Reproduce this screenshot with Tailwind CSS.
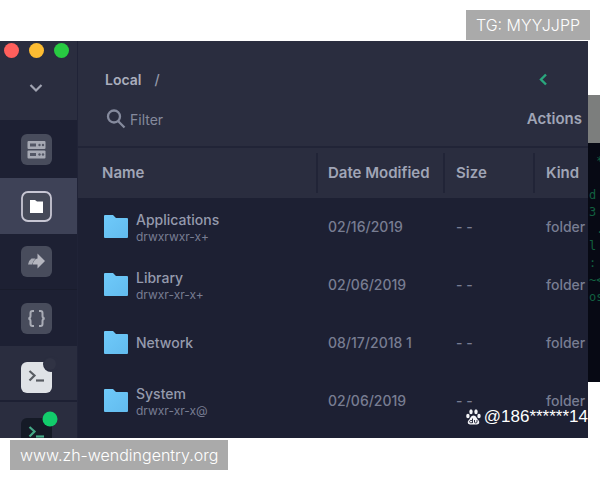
<!DOCTYPE html>
<html lang="en">
<head>
<meta charset="utf-8">
<title>File browser</title>
<script src="https://cdn.jsdelivr.net/npm/@tailwindcss/browser@4"></script>
</head>
<body class="relative flex min-h-screen flex-col overflow-hidden bg-white pt-[41px] pb-[42px] font-['Inter',sans-serif] text-sm text-[#9499ab]">
<div class="flex flex-1 items-stretch">
  <nav aria-label="Tools" class="flex w-[78px] shrink-0 flex-col border-r border-[#202337] bg-[#1d2033]">
    <div class="h-[79px] bg-[#2a2d3f]">
      <div class="flex gap-[10px] pt-[2px] pl-[4px]">
        <button aria-label="Close" class="size-[15px] rounded-full bg-[#ff5f5c]"></button>
        <button aria-label="Minimize" class="size-[15px] rounded-full bg-[#fdbc32]"></button>
        <button aria-label="Zoom" class="size-[15px] rounded-full bg-[#28cb42]"></button>
      </div>
      <button aria-label="Expand menu" class="mx-auto mt-[23px] block px-2 pr-[14px]">
        <svg width="14" height="14" viewBox="0 0 14 14" fill="none" stroke="#a1a4b2" stroke-width="2.2"><path d="M1.500 4 7 9.500 12.500 4"/></svg>
      </button>
    </div>
    <button aria-label="Servers" class="flex h-[58px] items-center pl-[21px]">
      <svg width="31" height="31" viewBox="0 0 31 31"><rect width="31" height="31" rx="6" fill="#484c5c"/><g fill="#a6a9b4"><rect x="6.500" y="7" width="18" height="8" rx="1"/><rect x="6.500" y="16.500" width="18" height="8" rx="1"/></g><g fill="#535766"><path d="M9 9.500h6v3H9zM9 19h6v3H9z"/><circle cx="18.500" cy="11" r="1.200"/><circle cx="22" cy="11" r="1.200"/><circle cx="18.500" cy="20.500" r="1.200"/><circle cx="22" cy="20.500" r="1.200"/></g></svg>
    </button>
    <button aria-label="Files" class="flex h-[56px] items-center bg-[#3e4257] pl-[21px]">
      <svg width="31" height="31" viewBox="0 0 31 31"><rect x="1" y="1" width="29" height="29" rx="6" fill="#454958" stroke="#c7c6d3" stroke-width="1.800"/><path d="M9 9h5l2 1.500h6V22H9z" fill="#fff"/></svg>
    </button>
    <button aria-label="Forward" class="flex h-[56px] items-center border-b border-[#191c2c] pl-[21px]">
      <svg width="31" height="31" viewBox="0 0 31 31" fill="#b5b6bf"><rect width="31" height="31" rx="6" fill="#484c5c"/><path d="M16.500 7.500l7.500 7.500-7.500 7.500V18.500h-5q1.500-5.500 5-6z"/><path d="M10.500 12.500h4q-2.500 2.500-3.500 6H7q.5-4 3.500-6z" fill="#a9abb5"/></svg>
    </button>
    <button aria-label="Snippets" class="flex h-[56px] items-center pl-[21px]">
      <svg width="31" height="31" viewBox="0 0 31 31"><rect width="31" height="31" rx="6" fill="#484c5c"/><path d="M13 8h-1.500q-2 0-2 2v3q0 2-2 2.500 2 .5 2 2.500v3q0 2 2 2H13M18 8h1.500q2 0 2 2v3q0 2 2 2.500-2 .5-2 2.500v3q0 2-2 2H18" fill="none" stroke="#a9acb6" stroke-width="2"/></svg>
    </button>
    <button aria-label="Terminal" class="flex h-[56px] items-center border-b-2 border-[#1d2033] bg-[#2a2d3f] pl-[21px]">
      <svg width="37" height="39" viewBox="0 -8 37 39"><rect width="31" height="31" rx="6" fill="#dfe2e6"/><circle cx="30" cy="2" r="8" fill="#2a2d3f"/><circle cx="29" cy="2" r="6" fill="#303344"/><path d="M8.500 9l5 4.500-5 5" fill="none" stroke="#585c62" stroke-width="2.200"/><path d="M15 18.500h8" stroke="#585c62" stroke-width="2.200"/></svg>
    </button>
    <button aria-label="Terminal, active session" class="flex h-[36px] items-start overflow-hidden bg-[#2a2d3f] pt-[9px] pl-[21px]">
      <svg class="shrink-0" width="38" height="38" viewBox="0 -7 38 38"><rect width="31" height="31" rx="6" fill="#151a26"/><path d="M8.500 9l5 4.500-5 5" fill="none" stroke="#45a987" stroke-width="2.200"/><path d="M15 18.500h8" stroke="#45a987" stroke-width="2.200"/><circle cx="29" cy="1" r="7.500" fill="#12cc6b"/></svg>
    </button>
  </nav>
  <main class="flex min-w-0 flex-1 flex-col bg-[#1d2033]">
    <header class="flex h-[107px] flex-col border-b-2 border-[#212437] bg-[#2a2d3f] pl-[27px]">
      <div class="mt-[27px] flex h-6 items-center justify-between pr-[39px]">
        <p class="flex gap-[13px] font-semibold"><span class="text-[#aaaebd]">Local</span><span class="font-medium">/</span></p>
        <button aria-label="Back">
          <svg width="11" height="14" viewBox="0 0 11 14" fill="none" stroke="#2aa77d" stroke-width="2.400"><path d="M8 1.500 3 6.500l5 5"/></svg>
        </button>
      </div>
      <div class="mt-[15px] flex h-6 items-center justify-between pr-[6px]">
        <div class="flex min-w-0 items-center gap-1">
          <label for="filter" aria-label="Filter"><svg width="21" height="22" viewBox="0 0 21 22" fill="none" stroke="#858a9d" stroke-width="2.300"><circle cx="9" cy="8.500" r="6"/><path d="M13 13l6.500 6.500"/></svg></label>
          <input id="filter" type="text" placeholder="Filter" class="h-6 w-40 min-w-0 bg-transparent outline-none placeholder:text-[#858a9d]">
        </div>
        <button class="text-[15px] font-semibold text-[#a0a5b6]">Actions</button>
      </div>
    </header>
    <table class="w-full table-fixed border-collapse text-left">
      <thead>
        <tr class="h-[50px] bg-[#2a2d3f] text-[15px] text-[#a0a5b6]">
          <th class="pl-6 font-semibold">Name</th>
          <th class="w-[127px] p-0 font-semibold"><div class="flex h-10 items-center border-l-2 border-[#212437] pl-[10px] whitespace-nowrap">Date Modified</div></th>
          <th class="w-[90px] p-0 font-semibold"><div class="flex h-10 items-center border-l-2 border-[#212437] pl-[11px]">Size</div></th>
          <th class="w-[55px] p-0 font-semibold"><div class="flex h-10 items-center border-l-2 border-[#212437] pl-[11px]">Kind</div></th>
        </tr>
      </thead>
      <tbody class="font-medium text-[#787d92]">
        <tr class="h-[58px]">
          <td class="pl-[26px]"><div class="flex items-center gap-2"><svg class="shrink-0" width="24" height="24" viewBox="0 0 24 24"><defs><linearGradient id="folder" x2="1" y2="1"><stop stop-color="#6fcafa"/><stop offset="1" stop-color="#62bbee"/></linearGradient></defs><path d="M1 0h8l3 3h11q1 0 1 1v18q0 1-1 1H1q-1 0-1-1V1q0-1 1-1z" fill="url(#folder)"/></svg><div><div class="leading-5 text-[#959aad]">Applications</div><div class="text-xs leading-[14px] font-normal">drwxrwxr-x+</div></div></div></td>
          <td class="pl-3">02/16/2019</td><td class="pl-[13px]">- -</td><td class="pl-[13px]">folder</td>
        </tr>
        <tr class="h-[58px]">
          <td class="pl-[26px]"><div class="flex items-center gap-2"><svg class="shrink-0" width="24" height="24" viewBox="0 0 24 24"><path d="M1 0h8l3 3h11q1 0 1 1v18q0 1-1 1H1q-1 0-1-1V1q0-1 1-1z" fill="url(#folder)"/></svg><div><div class="leading-5 text-[#959aad]">Library</div><div class="text-xs leading-[14px] font-normal">drwxr-xr-x+</div></div></div></td>
          <td class="pl-3">02/06/2019</td><td class="pl-[13px]">- -</td><td class="pl-[13px]">folder</td>
        </tr>
        <tr class="h-[58px]">
          <td class="pl-[26px]"><div class="flex items-center gap-2"><svg class="shrink-0" width="24" height="24" viewBox="0 0 24 24"><path d="M1 0h8l3 3h11q1 0 1 1v18q0 1-1 1H1q-1 0-1-1V1q0-1 1-1z" fill="url(#folder)"/></svg><div class="leading-5 text-[#959aad]">Network</div></div></td>
          <td class="pl-3 whitespace-nowrap">08/17/2018 1</td><td class="pl-[13px]">- -</td><td class="pl-[13px]">folder</td>
        </tr>
        <tr class="h-[58px]">
          <td class="pl-[26px]"><div class="flex items-center gap-2"><svg class="shrink-0" width="24" height="24" viewBox="0 0 24 24"><path d="M1 0h8l3 3h11q1 0 1 1v18q0 1-1 1H1q-1 0-1-1V1q0-1 1-1z" fill="url(#folder)"/></svg><div><div class="leading-5 text-[#959aad]">System</div><div class="text-xs leading-[14px] font-normal">drwxr-xr-x@</div></div></div></td>
          <td class="pl-3">02/06/2019</td><td class="pl-[13px]">- -</td><td class="pl-[13px]">folder</td>
        </tr>
      </tbody>
    </table>
  </main>
  <div class="mt-[54px] mb-[56px] w-3 shrink-0 overflow-hidden border-t-[48px] border-[#7c7e7d] bg-[#070914]">
    <pre class="pt-[10px] pl-[1px] font-['DejaVu_Sans_Mono',monospace] text-xs leading-[17px] text-[#126040]"> *

d
3
 .
l
:
~&lt;
os</pre>
  </div>
</div>
<p class="absolute right-[10px] top-[10px] bg-[#aaaaaa] px-[10px] text-base leading-[30px] font-light text-white">TG: MYYJJPP</p>
<p class="absolute bottom-[10px] left-[10px] bg-[#aaaaaa] px-[10px] text-base leading-[30px] font-light text-white">www.zh-wendingentry.org</p>
<p class="absolute right-[12px] bottom-[51px] flex items-center gap-[3px] text-[17px] leading-6 text-white font-['Liberation_Sans',sans-serif]">
  <svg width="15" height="16" viewBox="0 0 15 16" fill="#f4f4f8"><ellipse cx="5" cy="2.700" rx="1.700" ry="2.500"/><ellipse cx="10" cy="2.700" rx="1.700" ry="2.500"/><ellipse cx="1.900" cy="7" rx="1.700" ry="2.200"/><ellipse cx="13" cy="7" rx="1.700" ry="2.200"/><path d="M7.500 6.500q2 0 3 2t2.500 3.500q1 3-2 3.500H4q-3-.5-2-3.500 1.500-1.500 2.500-3.500t3-2z"/><path d="M6.500 9.500v4.500M6.500 11.500q-3-.5-3 1.200t3 1M8.500 11v2q0 1 1.200 1t1.300-1v-2" fill="none" stroke="#303344"/></svg>
  <span>@186******14</span>
</p>
</body>
</html>
